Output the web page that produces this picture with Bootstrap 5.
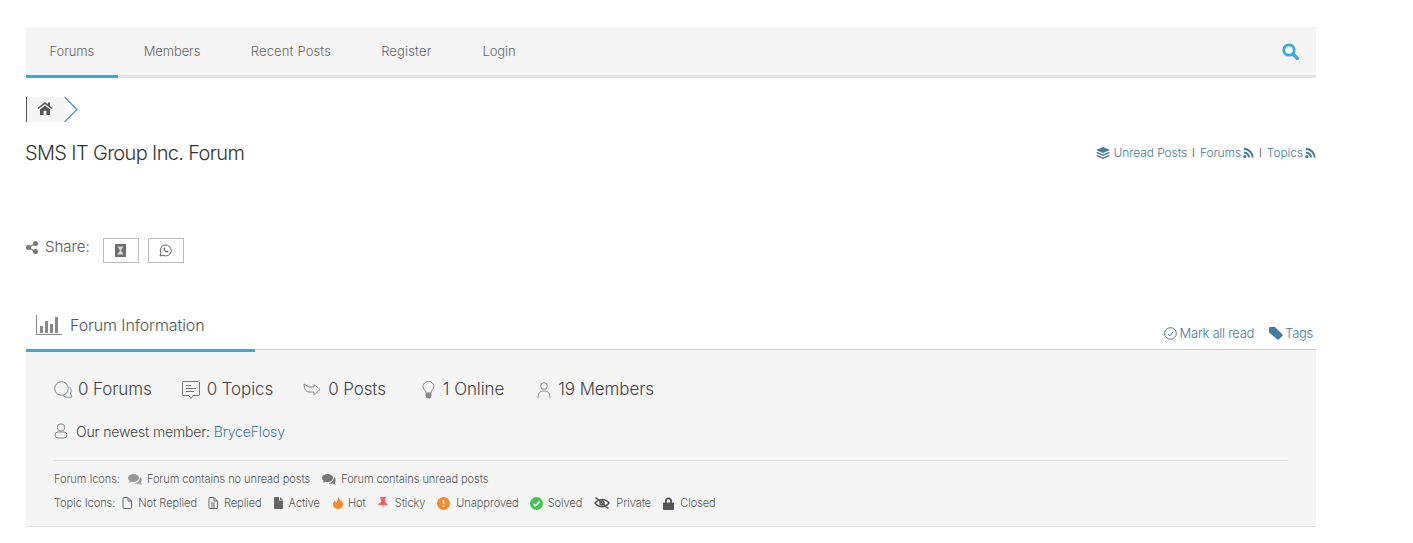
<!DOCTYPE html>
<html lang="en"><head><meta charset="utf-8"><title>Forum</title>
<link href="https://cdn.jsdelivr.net/npm/bootstrap@5.3.0/dist/css/bootstrap.min.css" rel="stylesheet">
<style>
body{font-family:Inter,"Noto Sans",sans-serif;color:#444;background:#fff;overflow:hidden}
a{text-decoration:none}
.page-wrap{width:1290px;margin:27px 0 0 26px}
.top-nav{background:#f5f5f5;border-bottom:3px solid #e3e3e3;height:51px}
.top-nav a{color:#666;font-size:13px;font-weight:300;height:51px;margin-bottom:-3px;padding:0 23.5px;line-height:49px;letter-spacing:-.1px}
.top-nav a.now{border-bottom:3px solid #3ea6de}
.top-nav a.wide-link{letter-spacing:.15px}
.search-ico{margin:16px 17px 0 auto}
.crumb-row{height:25px;margin-top:19px}
.crumb-home{width:38px;height:25px;background:#f5f5f5;border-left:1px solid #555;padding:0 2px 3px 0}
.page-title{font-size:20px;font-weight:300;color:#333;margin:0 0 0 -1px;letter-spacing:-.65px;line-height:24px}
.title-row{margin-top:19px}
.rss-links{font-size:12px;font-weight:300;color:#444;letter-spacing:-.1px}
.rss-links a,.info-links a,.member-link{color:#457b9d}
.rss-sep{margin:0 5px;font-size:11px}
.share-row{margin-top:72px;height:25px;font-size:15px;font-weight:300;color:#555}
.share-btn{width:36px;height:25px;border:1px solid #bbb;margin-top:1px}
.info-head{margin-top:42px;height:46px;border-bottom:1px solid #ccc}
.info-tab{width:229px;height:48px;border-bottom:3px solid #3ea6de;font-size:16px;font-weight:300;color:#555;padding:0 0 4px 10px;letter-spacing:-.1px;position:relative;z-index:1}
.info-links{font-size:13px;font-weight:300;letter-spacing:-.28px;padding-right:3px;padding-top:20px}
.info-panel{background:#f5f5f5;border-bottom:1px solid #e3e3e3;padding:26px 28px 14px;height:177px}
.stat-row{font-size:17px;font-weight:300;color:#444;height:28px;letter-spacing:-.1px}
.newest-row{font-size:14px;font-weight:300;margin-top:13px;height:28px;letter-spacing:-.15px}
.legend-rule{border-top:1px solid #e0e0e0;margin-top:15px;padding-top:9px}
.legend-row{font-size:11px;color:#555;font-weight:300;height:18px;margin-bottom:6px;letter-spacing:-.05px}
.legend-row span{white-space:nowrap}
</style></head><body>
<div class="page-wrap">
<nav class="top-nav d-flex align-items-start">
<a class="now" href="#">Forums</a><a href="#" style="padding-left:26px">Members</a><a class="wide-link" href="#" style="padding-left:27px">Recent Posts</a><a class="wide-link" href="#" style="padding-left:26.5px">Register</a><a href="#" style="padding-left:27.5px">Login</a>
<svg class="search-ico" width="17" height="17" viewBox="0 0 17 17" fill="none" stroke="#3ea6de"><circle cx="7" cy="7" r="5.200" stroke-width="2.800"/><path d="M11 11l4.500 4.500" stroke-width="3.400" stroke-linecap="round"/></svg>
</nav>
<div class="crumb-row d-flex">
<div class="crumb-home d-flex align-items-center justify-content-center"><svg width="16" height="14" viewBox="0 0 16 14"><path fill="#555" d="M8 1L0.5 7l1 1L8 3l6.500 5 1-1-2.500-2V1.500h-2V3.200zM3 8.600V14h3.600V9.800h2.800V14H13V8.600L8 4.600z"/></svg></div>
<svg width="14" height="25" viewBox="0 0 14 25" fill="none"><path d="M.5 0l12.500 12.500L.5 25" stroke="#4a8fb8" stroke-width="1.200"/></svg>
</div>
<div class="title-row d-flex justify-content-between align-items-center">
<h1 class="page-title">SMS IT Group Inc. Forum</h1>
<div class="rss-links d-flex align-items-center">
<a href="#" class="d-flex align-items-center"><svg style="margin-right:4px" width="14" height="13" viewBox="0 0 14 13" fill="#457b9d"><path d="M7 0l7 3-7 3-7-3zM1.500 5L7 7.400 12.500 5 14 6 7 9 0 6zM1.500 8L7 10.400 12.500 8 14 9 7 12 0 9z"/></svg>Unread Posts</a>
<span class="rss-sep">I</span>
<a href="#" class="d-flex align-items-center">Forums<svg style="margin-left:2px" width="11" height="12" viewBox="0 0 12 12" fill="none" stroke="#457b9d" stroke-width="2.200"><circle cx="2" cy="10" r="1.800" fill="#457b9d" stroke="none"/><path d="M1 5.500A5.500 5.500 0 0 1 6.500 11M1 1.500A9.500 9.500 0 0 1 10.500 11"/></svg></a>
<span class="rss-sep">I</span>
<a href="#" class="d-flex align-items-center">Topics<svg style="margin-left:2px" width="11" height="12" viewBox="0 0 12 12" fill="none" stroke="#457b9d" stroke-width="2.200"><circle cx="2" cy="10" r="1.800" fill="#457b9d" stroke="none"/><path d="M1 5.500A5.500 5.500 0 0 1 6.500 11M1 1.500A9.500 9.500 0 0 1 10.500 11"/></svg></a>
</div></div>
<div class="share-row d-flex align-items-start">
<span class="d-flex align-items-center" style="height:20px"><svg style="margin-right:7px" width="12" height="13" viewBox="0 0 12 13" fill="#777"><circle cx="2.500" cy="6.500" r="2.500"/><circle cx="9.500" cy="2.500" r="2.500"/><circle cx="9.500" cy="10.500" r="2.500"/><path d="M2.500 6.500l7-4M2.500 6.500l7 4" stroke="#777" stroke-width="1.200"/></svg>Share:</span>
<a class="share-btn d-flex align-items-center justify-content-center" style="margin-left:13px" href="#"><svg width="11" height="13" viewBox="0 0 11 13"><rect width="11" height="13" fill="#6e6e6e"/><path d="M2.500 2.500h6L6 6.500l2.500 4h-6L5 6.500z" fill="#d8d8d8"/></svg></a>
<a class="share-btn d-flex align-items-center justify-content-center" style="margin-left:9px" href="#"><svg width="13" height="13" viewBox="0 0 13 13" fill="none" stroke="#666"><path d="M1 12l.9-3A5.500 5.500 0 1 1 4 11.200z"/><path d="M4.500 4c0 2.500 2 4.500 4.500 4.500l.5-1.200-1.500-.8-.7.6c-.7-.3-1.200-.9-1.500-1.500l.6-.7-.8-1.500z" fill="#666" stroke="none"/></svg></a>
</div>
<div class="info-head d-flex justify-content-between align-items-start">
<div class="info-tab d-flex align-items-center"><svg class="me-2" width="26" height="20" viewBox="0 0 26 20" fill="#888"><path d="M0 0h1v19h25v1H0z"/><rect x="4" y="11" width="3" height="7"/><rect x="9" y="6" width="3" height="12"/><rect x="14" y="9" width="3" height="9"/><rect x="19" y="2" width="3" height="16"/></svg>Forum Information</div>
<div class="info-links d-flex align-items-center">
<a href="#" class="d-flex align-items-center" style="margin-right:15px"><svg style="margin-right:3px" width="13" height="13" viewBox="0 0 13 13" fill="none" stroke="#457b9d"><circle cx="6.500" cy="6.500" r="5.800"/><path d="M3.800 6.800l2 2 3.400-4"/></svg>Mark all read</a>
<a href="#" class="d-flex align-items-center"><svg width="14" height="13" viewBox="0 0 14 13" fill="#457b9d" style="margin-right:2px"><path d="M0 1.200C0 .5.5 0 1.200 0H6l7.500 7.500a1 1 0 0 1 0 1.400L9 13 .5 5.800A1 1 0 0 1 0 5z"/></svg>Tags</a>
</div></div>
<section class="info-panel">
<div class="stat-row d-flex align-items-center">
<svg width="19" height="18" viewBox="0 0 19 18" fill="none" stroke="#888"><circle cx="7.500" cy="7.500" r="6.800"/><path d="M15.800 6c1.500 2 1.700 4.500.7 6.500l1.500 3.500c-3 .7-6.500.7-9-1.500"/></svg><span style="margin:0 30px 0 5px">0 Forums</span>
<svg width="18" height="18" viewBox="0 0 18 18" fill="none" stroke="#777"><path d="M1.500 .5h15a1 1 0 0 1 1 1v12a1 1 0 0 1-1 1H11l-2 3-2-3H1.500a1 1 0 0 1-1-1v-12a1 1 0 0 1 1-1z"/><path d="M4 4.500h5M4 7.500h10M4 10.500h8"/></svg><span style="margin:0 30px 0 7px">0 Topics</span>
<svg width="18" height="14" viewBox="0 0 18 14" fill="none" stroke="#888"><path d="M1 1l5 3h5V1.500l6 5-6 5.500V9H6C3 9 1 6 1 1z"/></svg><span style="margin:0 36px 0 7px">0 Posts</span>
<svg width="13" height="18" viewBox="0 0 13 18" fill="none" stroke="#888"><path d="M4 12c0-3-3-3.500-3-6.500a5.500 5 0 0 1 11 0c0 3-3 3.500-3 6.500z"/><path d="M4 12.500h5V15l-1 2H5l-1-2z" fill="#888"/></svg><span style="margin:0 33px 0 8px">1 Online</span>
<svg width="14" height="17" viewBox="0 0 14 17" fill="none" stroke="#888"><circle cx="7" cy="4" r="3.300"/><path d="M1 16c0-5 2-7 6-7s6 2 6 7"/></svg><span style="margin-left:7px">19 Members</span>
</div>
<div class="newest-row d-flex align-items-center"><svg width="14" height="16" viewBox="0 0 14 16" fill="none" stroke="#888" style="margin-right:8px"><circle cx="7" cy="4.500" r="3.700"/><rect x="1" y="9" width="12" height="6" rx="3"/></svg><span>Our newest member:&nbsp;<a href="#" class="member-link">BryceFlosy</a></span></div>
<div class="legend-rule">
<div class="legend-row d-flex align-items-center"><span style="margin-right:8px">Forum Icons:</span>
<svg width="14" height="11" viewBox="0 0 14 11" fill="#999" style="margin-right:5px"><ellipse cx="5.500" cy="4" rx="5.500" ry="4"/><path d="M2 6.500L1 9l3-1.500zM12 3c2 1 2 4 1 5l.8 3-3-1.500c-2 .5-3.500 0-4.500-.5 3 0 5.500-2 5.700-6z"/></svg><span style="margin-right:12px">Forum contains no unread posts</span>
<svg width="14" height="11" viewBox="0 0 14 11" fill="#777" style="margin-right:5px"><ellipse cx="5.500" cy="4" rx="5.500" ry="4"/><path d="M2 6.500L1 9l3-1.500zM12 3c2 1 2 4 1 5l.8 3-3-1.500c-2 .5-3.500 0-4.500-.5 3 0 5.500-2 5.700-6z"/></svg><span>Forum contains unread posts</span></div>
<div class="legend-row d-flex align-items-center"><span style="margin-right:7px">Topic Icons:</span>
<svg width="10" height="12" viewBox="0 0 10 12" fill="none" stroke="#666" style="margin-right:6px"><path d="M1 1.500a1 1 0 0 1 1-1h4l3.500 3.500v6.500a1 1 0 0 1-1 1H2a1 1 0 0 1-1-1zM6 .5V4h3.500"/></svg><span style="margin-right:11px">Not Replied</span>
<svg width="10" height="12" viewBox="0 0 10 12" fill="none" stroke="#666" style="margin-right:6px"><path d="M1 1.500a1 1 0 0 1 1-1h4l3.500 3.500v6.500a1 1 0 0 1-1 1H2a1 1 0 0 1-1-1zM6 .5V4h3.500M3 6h4M3 8h4M3 10h4"/></svg><span style="margin-right:12px">Replied</span>
<svg width="9" height="12" viewBox="0 0 9 12" fill="#666" style="margin-right:6px"><path d="M0 1a1 1 0 0 1 1-1h4v3.500h4V11a1 1 0 0 1-1 1H1a1 1 0 0 1-1-1zM6 0l3 3H6z"/></svg><span style="margin-right:13px">Active</span>
<svg width="10" height="12" viewBox="0 0 10 12" fill="#f58a2f" style="margin-right:5px"><path d="M5 0c1 2.500 5 4 5 7.500A5 4.500 0 0 1 0 7.500C0 5.500 1 4.500 2 3.500l1 2C4.500 4 5.500 2.500 5 0z"/></svg><span style="margin-right:12px">Hot</span>
<svg width="10" height="12" viewBox="0 0 10 12" fill="#f45b5b" style="margin-right:7px"><path d="M2 0h6v1L7 2v3l2.500 2v1H5.500L5 12l-.5-4H.5V7L3 5V2L2 1z"/></svg><span style="margin-right:12px">Sticky</span>
<svg width="13" height="13" viewBox="0 0 13 13" style="margin-right:6px"><circle cx="6.500" cy="6.500" r="6.500" fill="#f58a2f"/><path d="M6.500 3v4.200M6.500 8.500v1.500" stroke="#fff" stroke-width="1.600"/></svg><span style="margin-right:11px">Unapproved</span>
<svg width="13" height="13" viewBox="0 0 13 13" style="margin-right:5px"><circle cx="6.500" cy="6.500" r="6.500" fill="#43c355"/><path d="M3.500 6.800l2 2 4-4.200" stroke="#fff" stroke-width="1.600" fill="none"/></svg><span style="margin-right:12px">Solved</span>
<svg width="16" height="12" viewBox="0 0 16 12" fill="none" stroke="#555" stroke-width="1.500" style="margin-right:6px"><path d="M1 6c3-4 10-5 14 0-4 5-10 5-14 0zM1.500 .5l13 11"/><circle cx="8" cy="6" r="2"/></svg><span style="margin-right:12px">Private</span>
<svg width="11" height="13" viewBox="0 0 11 13" fill="#555" style="margin-right:6px"><path d="M2 5.500V4a3.500 3.500 0 0 1 7 0v1.500h1a1 1 0 0 1 1 1V12a1 1 0 0 1-1 1H1a1 1 0 0 1-1-1V6.500a1 1 0 0 1 1-1zM3.800 5.500h3.400V4a1.700 1.700 0 0 0-3.400 0z"/></svg><span>Closed</span>
</div></div>
</section>
</div>
<script src="https://cdn.jsdelivr.net/npm/bootstrap@5.3.0/dist/js/bootstrap.bundle.min.js"></script>
</body></html>
